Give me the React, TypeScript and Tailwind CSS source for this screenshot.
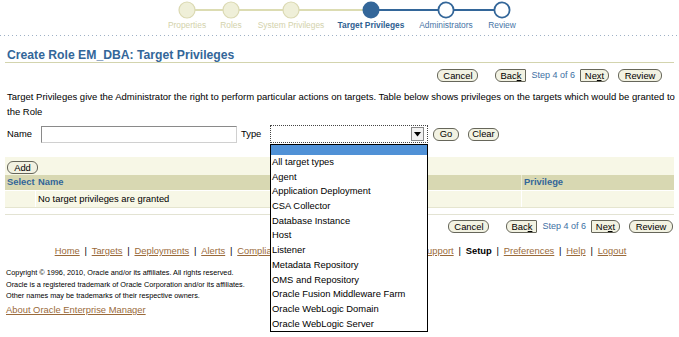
import React from "react";

function Btn({ children, cls }: { children: React.ReactNode; cls: string }) {
  return (
    <span
      className={`inline-flex items-center justify-center h-[13px] border border-[#66665a] bg-[#f2f2e2] text-[9.4px] text-black leading-none shrink-0 ${cls}`}
    >
      {children}
    </span>
  );
}

function NavButtons({ pr }: { pr: string }) {
  return (
    <div className={`flex items-center justify-end ${pr}`}>
      <Btn cls="w-[41px] rounded-[6px]">Cancel</Btn>
      <Btn cls="w-[31px] rounded-l-[6px] rounded-r-[1px] ml-[17px]">
        <span>
          Bac<u>k</u>
        </span>
      </Btn>
      <span className="text-[9px] text-[#3d6fa3] mx-[5px] leading-none">Step 4 of 6</span>
      <Btn cls="w-[29px] rounded-r-[6px] rounded-l-[1px]">
        <span>
          Ne<u>x</u>t
        </span>
      </Btn>
      <Btn cls="w-[44px] rounded-[6px] ml-[9px]">Review</Btn>
    </div>
  );
}

function Train() {
  const labels: { t: string; w: string; c: string }[] = [
    { t: "Properties", w: "w-[44px]", c: "text-[#d3d2ac]" },
    { t: "Roles", w: "w-[44px]", c: "text-[#d3d2ac]" },
    { t: "System Privileges", w: "w-[76px]", c: "text-[#d3d2ac]" },
    { t: "Target Privileges", w: "w-[84px]", c: "text-[#2f5f91] font-bold" },
    { t: "Administrators", w: "w-[66px]", c: "text-[#4674a6]" },
    { t: "Review", w: "w-[46px]", c: "text-[#4674a6]" },
  ];
  return (
    <div className="h-[35px]">
      <svg width="679" height="19" className="block">
        <line x1="187" y1="10" x2="371" y2="10" stroke="#dcdcb2" strokeWidth="2" />
        <line x1="371" y1="10" x2="502" y2="10" stroke="#336699" strokeWidth="2" />
        {[187, 231, 291].map((x) => (
          <circle key={x} cx={x} cy="10" r="8" fill="#efefd8" stroke="#dbd9b2" strokeWidth="1.2" />
        ))}
        <circle cx="371" cy="10" r="8.5" fill="#336699" />
        {[446, 502].map((x) => (
          <circle key={x} cx={x} cy="10" r="7.6" fill="#ffffff" stroke="#336699" strokeWidth="1.8" />
        ))}
      </svg>
      <div className="flex pl-[165px] text-[8.4px] leading-[12px]">
        {labels.map((l) => (
          <div key={l.t} className={`${l.w} flex justify-center whitespace-nowrap ${l.c}`}>
            {l.t}
          </div>
        ))}
      </div>
    </div>
  );
}

const options = [
  "All target types",
  "Agent",
  "Application Deployment",
  "CSA Collector",
  "Database Instance",
  "Host",
  "Listener",
  "Metadata Repository",
  "OMS and Repository",
  "Oracle Fusion Middleware Farm",
  "Oracle WebLogic Domain",
  "Oracle WebLogic Server",
];

const footerLinks = [
  "Home",
  "Targets",
  "Deployments",
  "Alerts",
  "Compliance",
  "Jobs",
  "Reports",
  "My Oracle Support",
  "Setup",
  "Preferences",
  "Help",
  "Logout",
];

export default function App() {
  return (
    <div className="w-[679px] h-[337px] overflow-hidden relative bg-white text-black font-['Liberation_Sans',Arial,sans-serif]">
      <Train />
      <div className="h-px bg-[linear-gradient(to_right,#9fb1c6_1px,transparent_1px)] bg-[length:4px_1px]" />

      <div className="mt-[12px] mx-[5px] px-[2px] h-[15px] leading-[15px] border-b border-[#d3d4ae] text-[12.2px] font-bold text-[#336699]">
        Create Role EM_DBA: Target Privileges
      </div>

      <div className="mt-[6px]">
        <NavButtons pr="pr-[17px]" />
      </div>

      <div className="mt-[7px] px-[7px] text-[9.5px] leading-[15px] whitespace-nowrap">
        Target Privileges give the Administrator the right to perform particular actions on targets. Table below
        shows privileges on the targets which would be granted to
        <br />
        the Role
      </div>

      <div className="mt-[6px] flex items-center h-[18px] text-[9.4px]">
        <span className="w-[41px] pl-[7px]">Name</span>
        <span className="w-[196px] h-[17px] border border-[#8a8a8a] border-r-[#d0d0d0] border-b-[#d0d0d0] bg-white" />
        <span className="w-[33px] pl-[4px]">Type</span>
        <span className="w-[158px] h-[18px] border border-dotted border-[#444] flex justify-end items-center pr-[3px] bg-white">
          <span className="w-[13px] h-[14px] border border-[#888] bg-[#f2f2f2] flex items-center justify-center">
            <svg width="7" height="5">
              <polygon points="0,0 7,0 3.5,4.5" fill="#000" />
            </svg>
          </span>
        </span>
        <Btn cls="w-[26px] rounded-[6px] ml-[5px]">Go</Btn>
        <Btn cls="w-[31px] rounded-[6px] ml-[9px]">Clear</Btn>
      </div>

      <div className="mt-[14px] mx-[5px] bg-[#f7f7e6] text-[9.4px]">
        <div className="h-[18px] flex items-end pb-[1px] pl-[2px]">
          <Btn cls="w-[31px] rounded-[6px]">Add</Btn>
        </div>
        <div className="flex h-[15px] items-center bg-[#d8d8b2] font-bold text-[#336699]">
          <div className="w-[31px] pl-[2px]">Select</div>
          <div className="flex-1 pl-[2px]">Name</div>
          <div className="w-[153px] pl-[2px] border-l border-[#ecebd6] h-full flex items-center">Privilege</div>
        </div>
        <div className="flex h-[18px] items-center border-t border-[#ffffff] border-b border-b-[#e5e5cf]">
          <div className="w-[31px] h-full border-r border-white" />
          <div className="flex-1 pl-[2px]">No target privileges are granted</div>
          <div className="w-[153px] h-full border-l border-white" />
        </div>
      </div>

      <div className="mt-[6px] mx-[5px] h-px bg-[#e3e3d3]" />

      <div className="mt-[5px]">
        <NavButtons pr="pr-[6px]" />
      </div>

      <div className="mt-[12px] flex justify-center text-[9.4px] leading-[12px] pl-[2px]">
        {footerLinks.map((l, i) => (
          <React.Fragment key={l}>
            {i > 0 && <span className="px-[4.8px]">|</span>}
            {l === "Setup" ? (
              <span className="font-bold">{l}</span>
            ) : (
              <span className="text-[#9a6a3a] underline">{l}</span>
            )}
          </React.Fragment>
        ))}
      </div>

      <div className="mt-[10px] px-[6px] text-[7.3px] leading-[11.7px]">
        <div>Copyright © 1996, 2010, Oracle and/or its affiliates. All rights reserved.</div>
        <div>Oracle is a registered trademark of Oracle Corporation and/or its affiliates.</div>
        <div>Other names may be trademarks of their respective owners.</div>
      </div>
      <div className="mt-[2px] px-[6px] text-[9.4px] leading-[12px] text-[#9a6a3a] underline">
        About Oracle Enterprise Manager
      </div>

      <div className="absolute left-[270px] top-[144px] w-[158px] border border-black bg-white text-[9.4px]">
        <div className="h-[10px] bg-[#5091d6]" />
        {options.map((o) => (
          <div key={o} className="h-[14.7px] leading-[14.7px] pl-[1px] whitespace-nowrap">
            {o}
          </div>
        ))}
      </div>
    </div>
  );
}
